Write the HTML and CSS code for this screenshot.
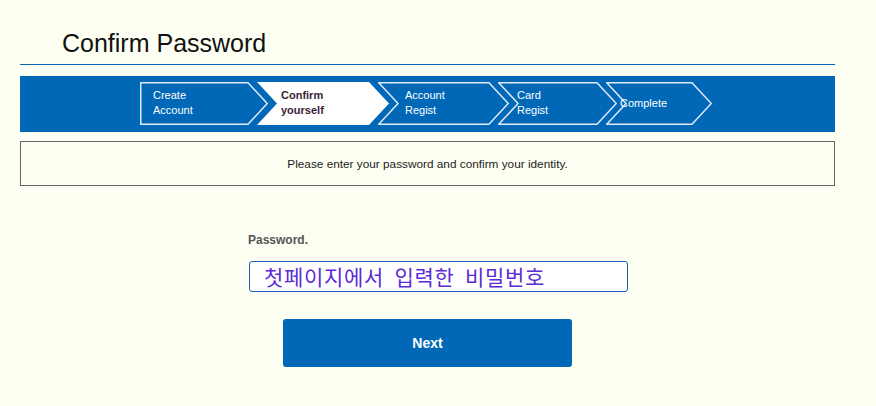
FILE: index.html
```html
<!DOCTYPE html>
<html lang="en">
<head>
<meta charset="utf-8">
<title>Confirm Password</title>
<link rel="stylesheet" href="styles.css">
</head>
<body>
<div class="page">
  <h1 class="title">Confirm Password</h1>

  <div class="steps-bar">
    <ol class="steps">
      <li class="step step-1">
        <svg class="step-shape" width="128" height="43" viewBox="0 0 128 43"><polygon points="0.75,0.75 108,0.75 127.25,21.5 108,42.25 0.75,42.25"/></svg>
        <span class="step-text">Create<br>Account</span>
      </li>
      <li class="step step-2 is-current">
        <svg class="step-shape" width="132" height="43" viewBox="0 0 132 43"><polygon points="0,0 112,0 132,21.5 112,43 0,43 20,21.5"/></svg>
        <span class="step-text">Confirm<br>yourself</span>
      </li>
      <li class="step step-3">
        <svg class="step-shape" width="131" height="43" viewBox="0 0 131 43"><polygon points="0.75,0.75 111,0.75 130.25,21.5 111,42.25 0.75,42.25 20,21.5"/></svg>
        <span class="step-text">Account<br>Regist</span>
      </li>
      <li class="step step-4">
        <svg class="step-shape" width="119" height="43" viewBox="0 0 119 43"><polygon points="0.75,0.75 99,0.75 118.25,21.5 99,42.25 0.75,42.25 20,21.5"/></svg>
        <span class="step-text">Card<br>Regist</span>
      </li>
      <li class="step step-5">
        <svg class="step-shape" width="106" height="43" viewBox="0 0 106 43"><polygon points="0.75,0.75 86,0.75 105.25,21.5 86,42.25 0.75,42.25 20,21.5"/></svg>
        <span class="step-text">Complete</span>
      </li>
    </ol>
  </div>

  <div class="notice">Please enter your password and confirm your identity.</div>

  <div class="form">
    <div class="field">
      <div class="label">Password.</div>
      <div class="input">첫페이지에서 입력한 비밀번호</div>
    </div>
    <button class="next" type="button">Next</button>
  </div>
</div>
</body>
</html>
```

FILE: styles.css
```css
html, body {
  margin: 0;
  padding: 0;
  background: #fdfff2;
}

body {
  font-family: "Liberation Sans", Arial, sans-serif;
  color: #222;
}

.page {
  width: 815px;
  margin-left: 20px;
}

.title {
  margin: 28px 0 0;
  padding: 0 0 6px 42px;
  font-size: 25px;
  line-height: 30px;
  font-weight: normal;
  color: #111;
  border-bottom: 1px solid #0068b7;
}

.steps-bar {
  margin-top: 11px;
  height: 56px;
  box-sizing: border-box;
  padding: 6px 0 0 120px;
  background: #0068b7;
}

.steps {
  list-style: none;
  margin: 0;
  padding: 0;
  display: flex;
  height: 43px;
}

.step {
  position: relative;
  box-sizing: border-box;
  height: 43px;
  margin-left: -11px;
  padding-bottom: 1px;
  display: flex;
  align-items: center;
  font-size: 11px;
  line-height: 15px;
  color: #fff;
}

.step-1 { width: 128px; margin-left: 0; padding-left: 13px; }
.step-2 { width: 132px; padding-left: 24px; }
.step-3 { width: 131px; padding-left: 27px; }
.step-4 { width: 119px; padding-left: 19px; }
.step-5 { width: 106px; padding-left: 14px; }

.step-shape {
  position: absolute;
  left: 0;
  top: 0;
}

.step-shape polygon {
  fill: none;
  stroke: #dfe9f7;
  stroke-width: 1.5;
}

.is-current .step-shape polygon {
  fill: #fff;
  stroke: none;
}

.step-text {
  position: relative;
}

.is-current .step-text {
  color: #3d1d38;
  font-weight: bold;
}

.notice {
  margin-top: 9px;
  height: 43px;
  border: 1px solid #666;
  display: flex;
  align-items: center;
  justify-content: center;
  font-size: 11.8px;
  color: #222;
}

.form {
  display: flex;
  flex-direction: column;
}

.field {
  padding-left: 228px;
  margin-top: 47px;
}

.label {
  font-size: 12px;
  line-height: 14px;
  font-weight: bold;
  color: #555;
}

.input {
  margin-top: 14px;
  margin-left: 1px;
  width: 379px;
  height: 31px;
  box-sizing: border-box;
  border: 1px solid #1b63b5;
  border-radius: 3px;
  background: #fff;
  padding-left: 14px;
  font-family: "Noto Sans CJK KR", "Noto Sans", sans-serif;
  font-size: 21px;
  line-height: 28px;
  letter-spacing: 0.7px;
  word-spacing: 5px;
  color: #5b2bd6;
}

.next {
  align-self: center;
  margin-top: 27px;
  width: 289px;
  height: 48px;
  border: none;
  border-radius: 3px;
  background: #0068b7;
  color: #fff;
  font-family: "Liberation Sans", Arial, sans-serif;
  font-size: 14px;
  font-weight: bold;
}
```
